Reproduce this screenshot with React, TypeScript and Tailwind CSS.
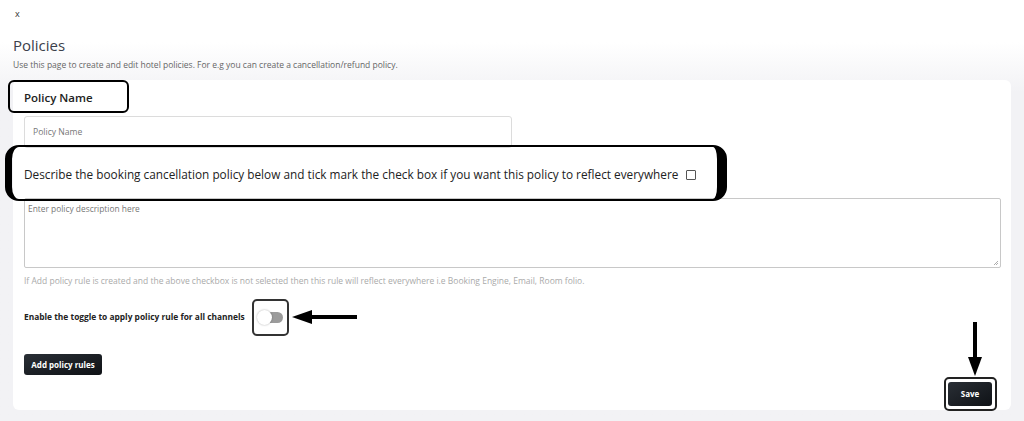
import React from "react";

const font = { fontFamily: '"Open Sans", "Noto Sans", Arial, sans-serif' };

const App = () => {
  return (
    <div
      className="relative w-full h-[421px] overflow-hidden bg-gradient-to-b from-white from-[10%] to-[#f2f2f5] to-[22%] px-[13px] text-[#222]"
      style={font}
    >
      {/* Header */}
      <div className="pt-[8px] pl-[2px] text-[9px] leading-[12px] text-[#333]">x</div>
      <h1 className="mt-[15px] text-[15px] leading-[20px] font-medium text-[#3b404a]">Policies</h1>
      <p className="mt-[4px] text-[8.5px] leading-[11px] text-[#666]">
        Use this page to create and edit hotel policies. For e.g you can create a cancellation/refund policy.
      </p>

      {/* Card */}
      <div className="mt-[10px] h-[330px] w-[998px] rounded-[6px] bg-white px-[11px] pt-[9px] flex flex-col">
        <div className="h-[17px] flex items-center text-[11.5px] font-semibold text-[#222]">Policy Name</div>
        <div className="mt-[10px] h-[32px] w-[488px] rounded-[3px] border border-[#dcdcdc] flex items-center px-[8px] text-[8.6px] text-[#777]">
          Policy Name
        </div>

        <div className="mt-[21px] h-[12px] flex items-center gap-[8px] text-[11.8px] text-[#222]">
          <span>
            Describe the booking cancellation policy below and tick mark the check box if you want this policy to reflect everywhere
          </span>
          <span className="h-[10px] w-[10px] border border-[#555] rounded-[1px]" />
        </div>

        <div className="mt-[17px] relative h-[70px] w-[977px] border border-[#c8c8c8] rounded-[2px] px-[3px] pt-[4px] text-[8.4px] text-[#777]">
          Enter policy description here
          <svg className="absolute right-[1px] bottom-[1px]" width="6" height="6" viewBox="0 0 6 6">
            <path d="M5 1 L1 5 M5 3 L3 5" stroke="#999" strokeWidth="0.8" />
          </svg>
        </div>

        <p className="mt-[7px] text-[8.5px] leading-[11px] text-[#aaa]">
          If Add policy rule is created and the above checkbox is not selected then this rule will reflect everywhere i.e Booking Engine, Email, Room folio.
        </p>

        <div className="mt-[25px] flex items-center gap-[14px]">
          <span className="text-[8.4px] font-bold text-[#222]">Enable the toggle to apply policy rule for all channels</span>
          <span className="relative h-[11px] w-[24px] rounded-full bg-[#9b9b9b]">
            <span className="absolute left-[-2px] top-[-2px] h-[15px] w-[15px] rounded-full bg-white shadow-[0_0_2px_rgba(0,0,0,0.35)]" />
          </span>
        </div>

        <div className="mt-[26px]">
          <button className="h-[21px] w-[78px] rounded-[3px] bg-gradient-to-br from-[#2a2f36] to-[#0f1216] text-[8px] font-bold text-white">
            Add policy rules
          </button>
        </div>

        <div className="mt-auto mb-[4px] flex justify-end pr-[8px]">
          <button className="h-[24px] w-[44px] rounded-[3px] bg-gradient-to-br from-[#2a2f36] to-[#0f1216] text-[8px] font-bold text-white">
            Save
          </button>
        </div>
      </div>

      {/* Annotations */}
      <div className="absolute left-[8px] top-[80px] h-[33px] w-[121px] rounded-[6px] border-2 border-black" />
      <div className="absolute left-[5px] top-[145px] h-[56px] w-[722px] rounded-[14px] border-y-2 border-l-[7px] border-r-[10px] border-black" />
      <div className="absolute left-[252px] top-[299px] h-[37px] w-[37px] rounded-[5px] border-2 border-[#333]" />
      <svg className="absolute left-[290px] top-[309px]" width="70" height="16" viewBox="0 0 70 16">
        <path d="M20 6 L67 6 L67 10 L20 10 Z" fill="black" />
        <path d="M2 8 L22 1 L22 15 Z" fill="black" />
      </svg>
      <svg className="absolute left-[967px] top-[321px]" width="16" height="56" viewBox="0 0 16 56">
        <path d="M6 1 L10 1 L10 38 L6 38 Z" fill="black" />
        <path d="M1 36 L15 36 L8 55 Z" fill="black" />
      </svg>
      <div className="absolute left-[944px] top-[377px] h-[34px] w-[53px] rounded-[5px] border-2 border-[#222]" />
    </div>
  );
};

export default App;
